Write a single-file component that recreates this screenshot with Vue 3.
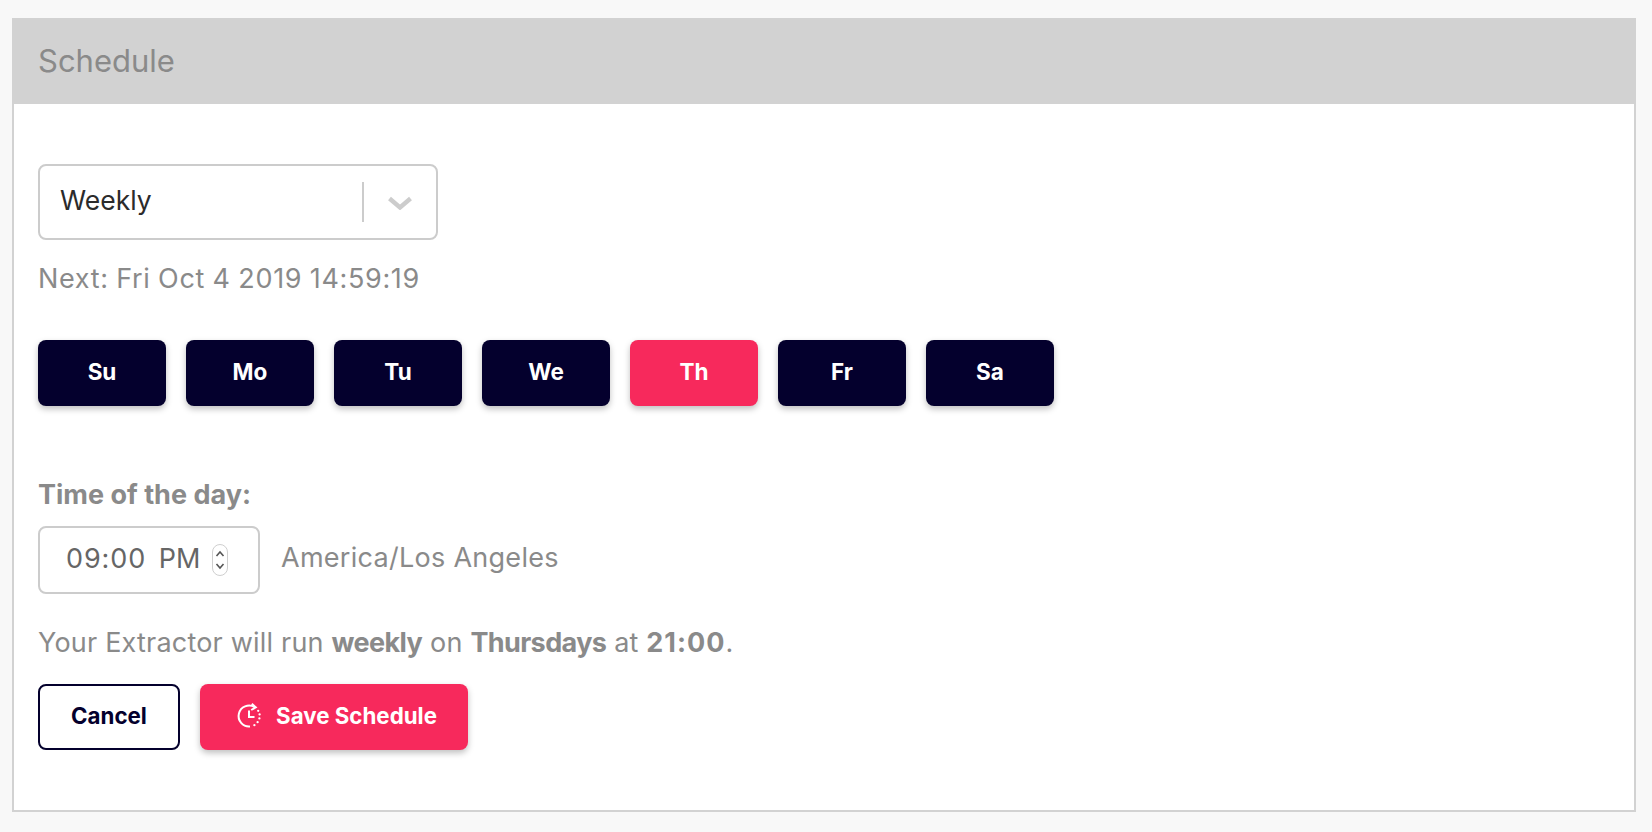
<script setup>
import { ref } from 'vue'

const days = ['Su', 'Mo', 'Tu', 'We', 'Th', 'Fr', 'Sa']
const activeDay = ref('Th')
</script>

<template>
    <div class="page">
        <section class="panel">
            <header class="panel-header">Schedule</header>
            <div class="panel-body">
                <div class="select">
                    <span class="select-value">Weekly</span>
                    <span class="select-divider"></span>
                    <svg class="chevron" viewBox="0 0 24 14" width="24" height="14">
                        <path d="M1.5 2.5l10.5 9 10.5-9" fill="none" stroke="#cccccc" stroke-width="4.4" />
                    </svg>
                </div>
                <p class="next">Next: Fri Oct 4 2019 14:59:19</p>

                <div class="days">
                    <button v-for="day in days" :key="day" class="day" :class="{ active: day === activeDay }">
                        {{ day }}
                    </button>
                </div>

                <label class="time-label">Time of the day:</label>
                <div class="time-row">
                    <div class="time-input">
                        <span class="time-value"><span class="time-digits">09:00</span> PM</span>
                        <span class="stepper">
                            <svg viewBox="0 0 14 30" width="14" height="30">
                                <path d="M3.5 11l3.5-4 3.5 4M3.5 19l3.5 4 3.5-4" fill="none" stroke="#555" stroke-width="1.6" />
                            </svg>
                        </span>
                    </div>
                    <span class="zone">America/Los Angeles</span>
                </div>

                <p class="summary">
                    Your Extractor will run <b>weekly</b> on <b>Thursdays</b> at <b class="num">21:00</b>.
                </p>

                <div class="actions">
                    <button class="btn btn-cancel">Cancel</button>
                    <button class="btn btn-save">
                        <svg viewBox="0 0 26 26" width="26" height="26" fill="none" stroke="#fff" stroke-width="2">
                            <path d="M18.6 4.1A10.5 10.5 0 1 0 14 23.5" />
                            <path d="M15.8 .8l4 3.6-4.6 2.6" />
                            <path d="M13 7.5v6.5h5.5" />
                            <g fill="#fff" stroke="none">
                                <circle cx="18.4" cy="22.2" r="1.15" />
                                <circle cx="21.6" cy="19.2" r="1.15" />
                                <circle cx="23.4" cy="15.4" r="1.15" />
                                <circle cx="23.6" cy="11.4" r="1.15" />
                                <circle cx="22.2" cy="7.8" r="1.15" />
                            </g>
                        </svg>
                        Save Schedule
                    </button>
                </div>
            </div>
        </section>
    </div>
</template>

<style scoped>
.page {
    height: 832px;
    box-sizing: border-box;
    padding: 18px 16px 20px 12px;
    background: #f8f8f8;
    font-family: Inter, "Liberation Sans", sans-serif;
    font-size: 27px;
    color: #8a8a8a;
}

.panel {
    height: 100%;
    box-sizing: border-box;
    background: #fff;
    border: 2px solid #d2d2d2;
    border-top: 0;
}

.panel-header {
    height: 86px;
    margin: 0 -2px;
    padding: 0 0 2px 26px;
    box-sizing: border-box;
    display: flex;
    align-items: center;
    background: #d2d2d2;
    font-size: 31px;
    color: #8a8a8a;
}

.panel-body {
    padding: 60px 24px 0;
}

.select {
    width: 400px;
    height: 76px;
    box-sizing: border-box;
    display: flex;
    align-items: center;
    border: 2px solid #cccccc;
    border-radius: 8px;
    padding-left: 20px;
}

.select-value {
    flex: 1;
    padding-bottom: 4px;
    font-size: 26.5px;
    color: #2b2b2b;
}

.select-divider {
    width: 2px;
    height: 40px;
    background: #cccccc;
}

.chevron {
    margin: 2px 24px 0 24px;
}

.next {
    margin: 20px 0 0;
    line-height: 38px;
    letter-spacing: 0.65px;
    word-spacing: -0.6px;
}

.days {
    display: flex;
    gap: 20px;
    margin-top: 42px;
}

.day {
    width: 128px;
    height: 66px;
    padding: 0 0 4px;
    border: 0;
    border-radius: 8px;
    background: #04002d;
    color: #fff;
    font-family: inherit;
    font-size: 22.5px;
    font-weight: 700;
    box-shadow: 0 3px 6px rgba(0, 0, 0, 0.25);
}

.day.active {
    background: #f7295c;
}

.time-label {
    display: block;
    margin-top: 72px;
    line-height: 34px;
    font-weight: 700;
}

.time-row {
    display: flex;
    align-items: center;
    gap: 21px;
    margin-top: 14px;
}

.time-input {
    width: 222px;
    height: 68px;
    box-sizing: border-box;
    display: flex;
    align-items: center;
    padding-left: 26px;
    border: 2px solid #cccccc;
    border-radius: 8px;
    color: #666;
    font-size: 27px;
}

.time-value {
    padding-bottom: 4px;
    word-spacing: 5px;
}

.time-digits {
    letter-spacing: 0.9px;
}

.stepper {
    display: flex;
    margin-left: 12px;
    border: 1px solid #cfcfcf;
    border-radius: 8px;
}

.zone {
    padding-bottom: 5px;
    letter-spacing: 0.28px;
}

.summary {
    margin: 29px 0 0;
    line-height: 40px;
    letter-spacing: 0.2px;
}

.summary b {
    font-weight: 700;
    letter-spacing: -0.6px;
}

.summary .num {
    letter-spacing: 1px;
}

.actions {
    display: flex;
    gap: 20px;
    margin-top: 21px;
}

.btn {
    height: 66px;
    padding: 0 0 3px;
    border-radius: 8px;
    font-family: inherit;
    font-size: 22.3px;
    font-weight: 700;
}

.btn-cancel {
    width: 142px;
    background: #fff;
    border: 2px solid #04002d;
    color: #04002d;
}

.btn-save {
    width: 268px;
    padding-left: 5px;
    display: flex;
    align-items: center;
    justify-content: center;
    gap: 14px;
    border: 0;
    background: #f7295c;
    color: #fff;
    box-shadow: 0 3px 6px rgba(0, 0, 0, 0.25);
}
</style>
